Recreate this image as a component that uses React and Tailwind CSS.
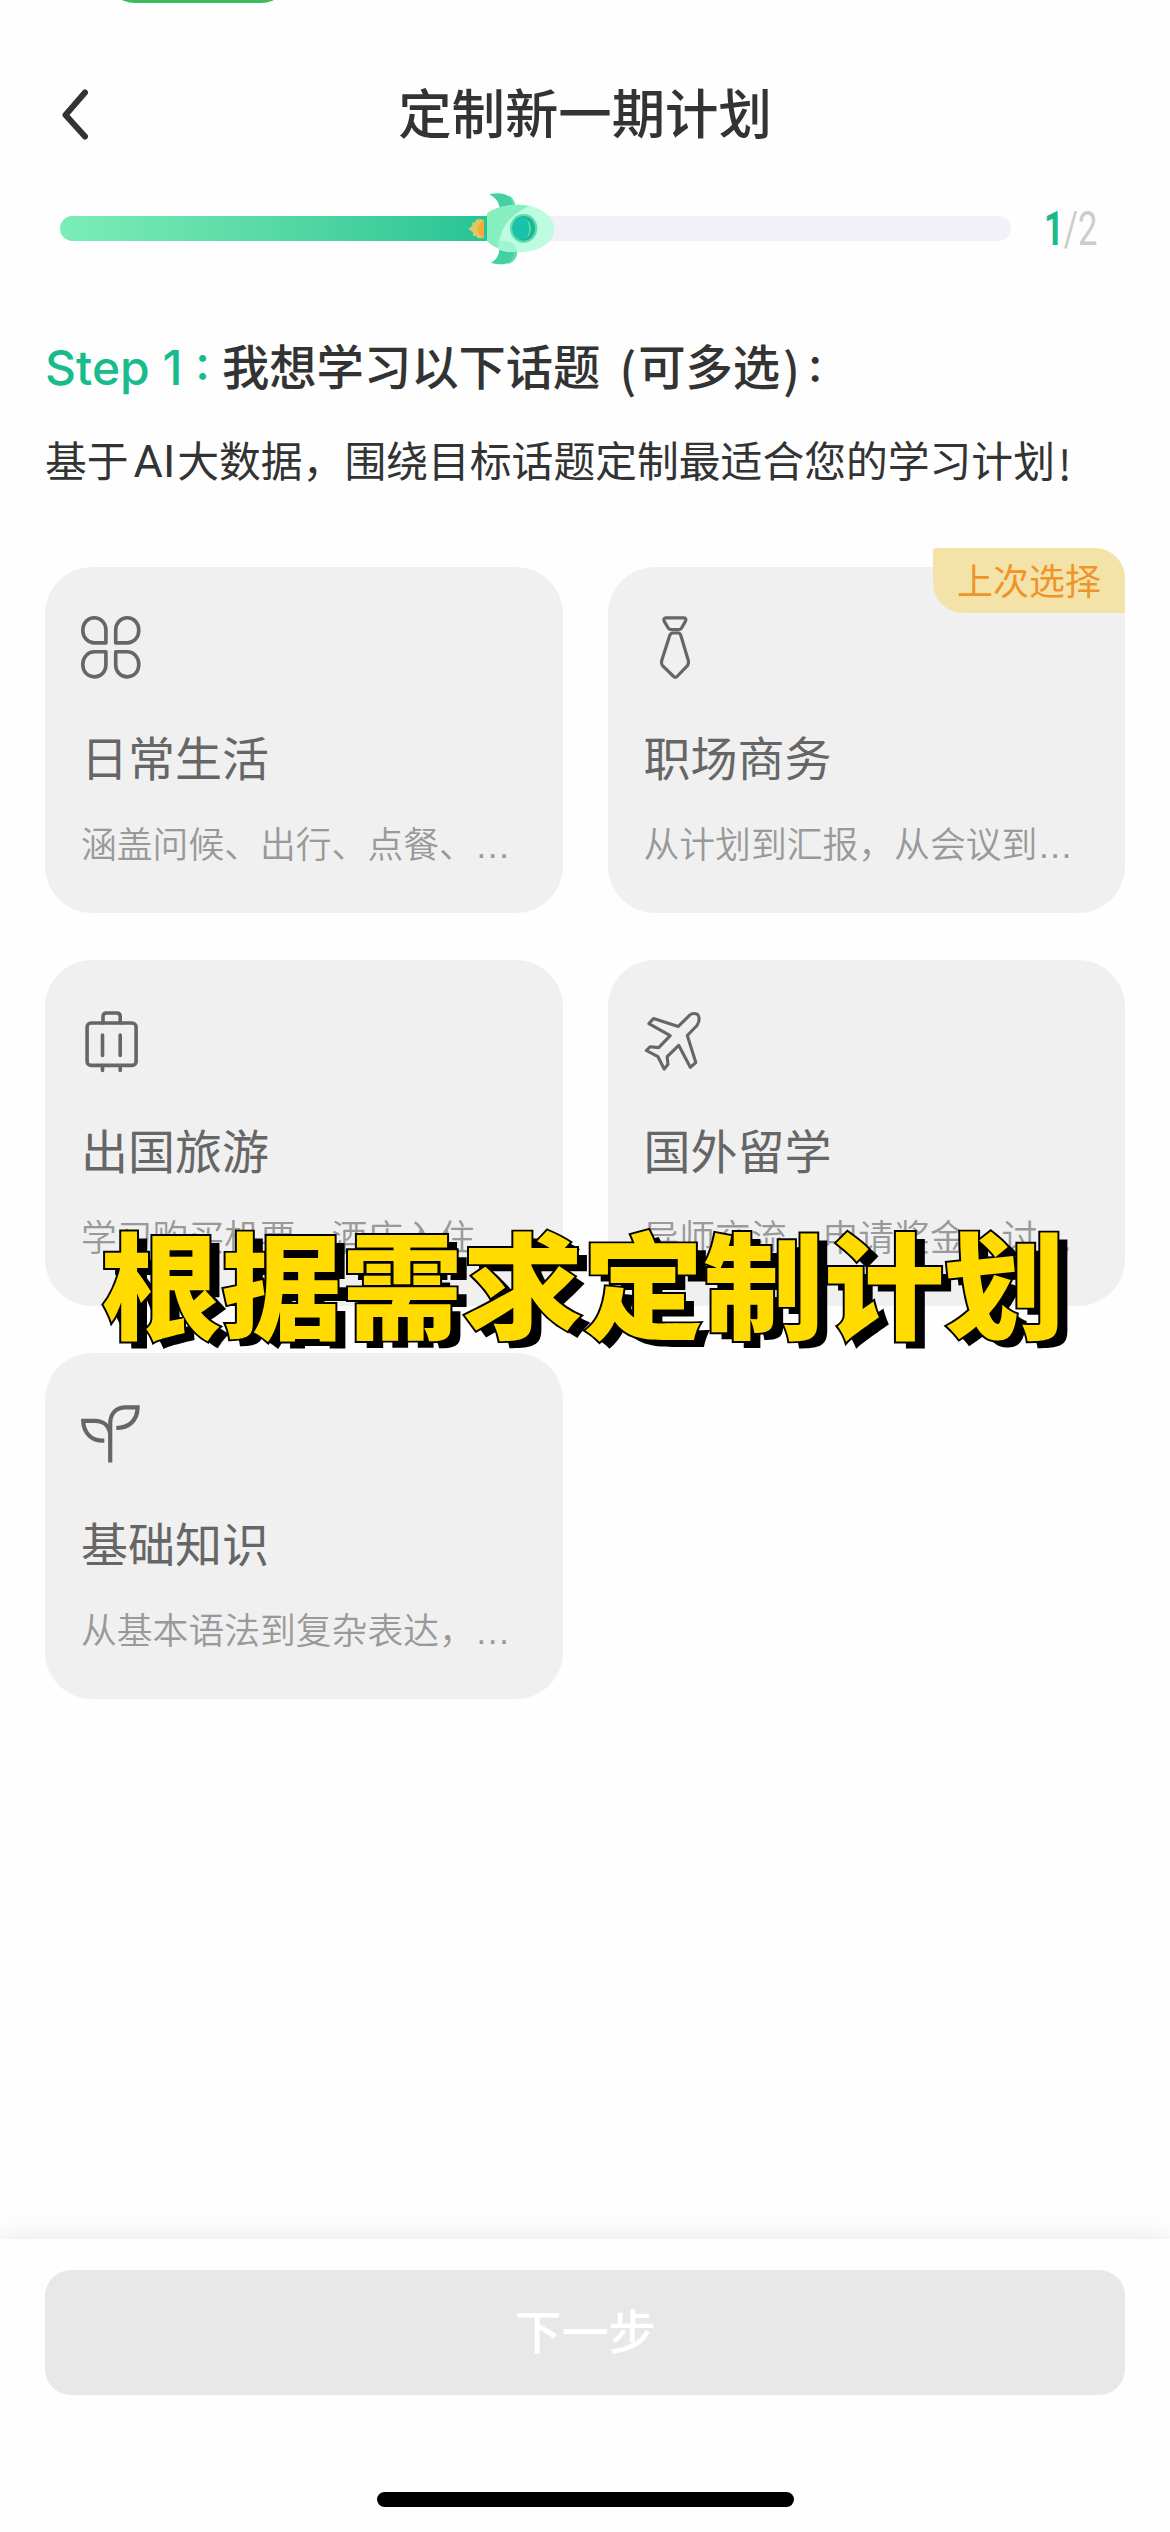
const topics = [
  { title: '日常生活', desc: '涵盖问候、出行、点餐、…', Icon: CloverIcon },
  { title: '职场商务', desc: '从计划到汇报，从会议到…', Icon: TieIcon, last: true },
  { title: '出国旅游', desc: '学习购买机票、酒店入住', Icon: SuitcaseIcon },
  { title: '国外留学', desc: '导师交流、申请奖金、讨…', Icon: PlaneIcon },
  { title: '基础知识', desc: '从基本语法到复杂表达，…', Icon: SproutIcon }
];

export default function App() {
  return (
    <div className="relative flex h-[2532px] w-[1170px] flex-col overflow-hidden bg-[#fefefe] font-['Inter','Noto_Sans_CJK_SC',sans-serif] text-[#333]">
      {/* Bottom edge of the status bar pill */}
      <div className="flex h-[60px] pl-[105px]">
        <div className="-mt-[57px] h-[60px] w-[186px] rounded-[30px] bg-[#3dbb5c]" />
      </div>

      {/* Header */}
      <header className="flex h-[107px] items-center pl-[60px] pr-[60px]">
        <svg className="h-[52px] w-[32px]" viewBox="0 0 32 52" fill="none" stroke="#333" strokeWidth="6" strokeLinecap="round" strokeLinejoin="round">
          <path d="M25 4.5 5.5 27 25 48.5" />
        </svg>
        <h1 className="flex-1 pt-[2px] pr-[32px] text-center text-[53.4px] leading-none font-medium">定制新一期计划</h1>
      </header>

      <Progress />

      {/* Intro */}
      <div className="px-[45px]">
        <h2 className="flex h-[60px] items-center whitespace-pre text-[47.3px] leading-[60px] font-medium">
          <span className="w-[177px] text-[48px] text-[#18bc8c]">Step 1 :</span>
          <span>我想学习以下话题</span>
          <span className="ml-[19px] font-['Noto_Sans_CJK_SC']">(</span>
          <span className="ml-[2px]">可多选</span>
          <span className="ml-[3px] font-['Noto_Sans_CJK_SC']">)</span>
          <span className="mb-[6px] ml-[8px]">:</span>
        </h2>
        <p className="mt-[34px] flex h-[60px] items-center whitespace-nowrap text-[41.8px] leading-[60px]">
          <span>基于</span>
          <span className="mr-[2px] ml-[5px] font-['Roboto'] text-[45px]">AI</span>
          <span>大数据，围绕目标话题定制最适合您的学习计划</span>
          <span className="ml-[3px] font-['Noto_Sans_CJK_SC']">!</span>
        </p>
      </div>

      {/* Topics */}
      <div className="mt-[75px] grid grid-cols-2 gap-x-[45px] gap-y-[47px] px-[45px]">
        {topics.map(topic => (
          <TopicCard key={topic.title} {...topic} />
        ))}
      </div>

      {/* Video caption lying over the cards */}
      <div className="absolute top-[1193px] left-[101px] scale-y-[0.95] whitespace-nowrap font-['Noto_Sans_CJK_SC'] text-[120.5px] leading-[175px] font-black text-[#ffdb00] [-webkit-text-stroke:4px_#000] [paint-order:stroke_fill] [text-shadow:10px_7px_0_#000]">
        根据需求定制计划
      </div>

      {/* Footer */}
      <footer className="mt-auto flex h-[293px] flex-col items-center bg-[#fefefe] px-[45px] pt-[31px] shadow-[0_0_26px_rgba(0,0,0,0.1)]">
        <button className="h-[125px] w-full rounded-[26px] bg-[#e8e8e8] text-[47px] font-medium text-white">下一步</button>
        <div className="mt-[97px] h-[15px] w-[417px] rounded-full bg-black" />
      </footer>
    </div>
  );
}

function Progress() {
  return (
    <div className="mb-[68px] flex h-[103px] items-center px-[60px] pt-[20px]">
      <div className="relative h-[25px] w-[951px] rounded-full bg-[#f2f1f7]">
        <div className="h-full w-[440px] rounded-l-full bg-gradient-to-r from-[#7bedb7] to-[#1fc394]" />
        <Rocket />
      </div>
      <div className="ml-[33px] w-[52px] origin-left scale-x-[0.72] whitespace-nowrap font-['Roboto'] text-[48px] leading-none text-[#ccc]">
        <span className="font-bold text-[#18bc8c]">1</span>/2
      </div>
    </div>
  );
}

function TopicCard({ title, desc, Icon, last }) {
  return (
    <div className="relative h-[346px] rounded-[47px] bg-[#f0f0f0] px-[36px] pt-[49px]">
      <svg className="h-[64px] w-[62px]" viewBox="0 0 62 64" fill="none" stroke="#666" strokeWidth="3.6" strokeLinejoin="round">
        <Icon />
      </svg>
      <div className="mt-[49px] text-[47px] leading-[60px] text-[#666]">{title}</div>
      <div className="mt-[33px] whitespace-nowrap font-['Liberation_Sans','Noto_Sans_CJK_SC',sans-serif] text-[35.8px] leading-[48px] font-[350] text-[#999]">{desc}</div>
      {last && (
        <div className="absolute -top-[19px] right-0 flex h-[65px] w-[192px] items-center justify-center rounded-tl-[3px] rounded-tr-[30px] rounded-bl-[30px] bg-[#f4e3a9] pt-[2px] text-[36px] text-[#f2932a]">
          上次选择
        </div>
      )}
    </div>
  );
}

function Rocket() {
  return (
    <svg className="absolute top-[-46px] left-[380px] h-[110px] w-[150px]" viewBox="0 0 450 330">
      <path d="M148 73C190 62 222 78 226 110L180 122C180 100 168 84 148 73Z" fill="#45d0a3" />
      <path d="M204 74C218 82 225 94 226 110L216 108C217 94 213 84 204 74Z" fill="#5fddb3" />
      <path d="M85 176 97 167V157L104 158 108 149 120 147 132 150V205L112 204 108 197 98 199 100 188Z" fill="#dcc961" />
      <path d="M132 152C119 157 113 167 113 178S119 199 132 203Z" fill="#faa73c" />
      <path d="M141 130C165 112 204 104 236 104C300 104 343 140 343 178C343 218 296 247 237 247C200 247 162 236 141 212Z" fill="#bdfce0" />
      <path d="M141 130C165 112 204 104 236 104L268 108C210 135 180 170 175 235C160 229 148 221 141 212Z" fill="#85efbf" />
      <path d="M178 238C186 244 205 247 231 246C231 271 205 292 153 279C170 268 177 256 178 238Z" fill="#45d0a3" />
      <path d="M174 214C200 207 229 218 232 246C208 248 188 244 174 235Z" fill="#9ff5d0" />
      <path d="M222 247H231C231 266 218 279 203 283C215 272 221 261 222 247Z" fill="#5fddb3" />
      <ellipse cx="251" cy="175" rx="41" ry="43" fill="#5cdcae" />
      <ellipse cx="251" cy="175" rx="34" ry="37" fill="#20b58f" />
      <ellipse cx="246" cy="175" rx="27" ry="34" fill="#17c3ab" />
      <path d="M260 149C277 160 277 191 260 203C270 187 270 165 260 149Z" fill="#5cdcae" />
    </svg>
  );
}

function CloverIcon() {
  const petal = 'M24.9 26.9V13.8C24.9 7 19.7 1.8 13.3 1.8S1.8 7 1.8 14.3S7 26.9 13.3 26.9Z';
  return (
    <>
      <path d={petal} />
      <path d={petal} transform="translate(59.6 0) scale(-1 1)" />
      <path d={petal} transform="translate(0 62.7) scale(1 -1)" />
      <path d={petal} transform="translate(59.6 62.7) scale(-1 -1)" />
    </>
  );
}

function TieIcon() {
  return (
    <g strokeWidth="3.2">
      <path d="M22 1.8H40C42 1.8 42.4 3.6 41.3 5.6L37.6 12C36.8 13.4 36 13.6 35 13.6H27C26 13.6 25 13.4 24.2 12L20.4 5.6C19.2 3.6 20 1.8 22 1.8Z" />
      <path d="M29 17H34C35.4 17 36.2 17.6 36.7 19L44.3 44.5C44.8 46.3 44.7 47.8 43.7 49.3L33 60.5C31.8 61.8 30.8 61.8 29.6 60.5L18.3 49.3C17.3 47.8 17.2 46.3 17.7 44.5L25.9 19C26.5 17.6 27.4 17 29 17Z" />
    </g>
  );
}

function SuitcaseIcon() {
  return (
    <g strokeLinecap="round">
      <rect x="6.1" y="14" width="49" height="42.4" rx="4" />
      <path d="M22 14V7.5Q22 4 25.5 4H35.7Q39.2 4 39.2 7.5V14" />
      <path d="M21.5 26V46.5M39.2 26V46.5M21.5 56.5V61.5M39.2 56.5V61.5" />
    </g>
  );
}

function PlaneIcon() {
  return (
    <path
      d="M9.5 9.5 34.3 17.4 45.5 6.3C48.5 3.8 51.5 4.4 53.5 5.4C55.5 8 55.4 12.5 53 16.5L43.3 26.5 51.8 53.5 46.3 58.3 34.7 36.3 23.2 47.7 23.9 55.5 20.2 60 14 47.7 2.3 41.5 6.3 37.7 14.7 38.6 26.2 26.7 4.9 14.6Z"
      strokeWidth="3.1"
    />
  );
}

function SproutIcon() {
  return (
    <g strokeWidth="4.2" strokeLinejoin="miter">
      <path d="M29.2 60.5V22C29.2 11.5 35 5.4 45 5.4H56.6C56.3 18.5 48 26 35.3 26" />
      <path d="M29.2 32C28 23.5 22 18.8 14 18.8H2.2C2.6 31.5 11 39.2 23.3 38.6" />
    </g>
  );
}
